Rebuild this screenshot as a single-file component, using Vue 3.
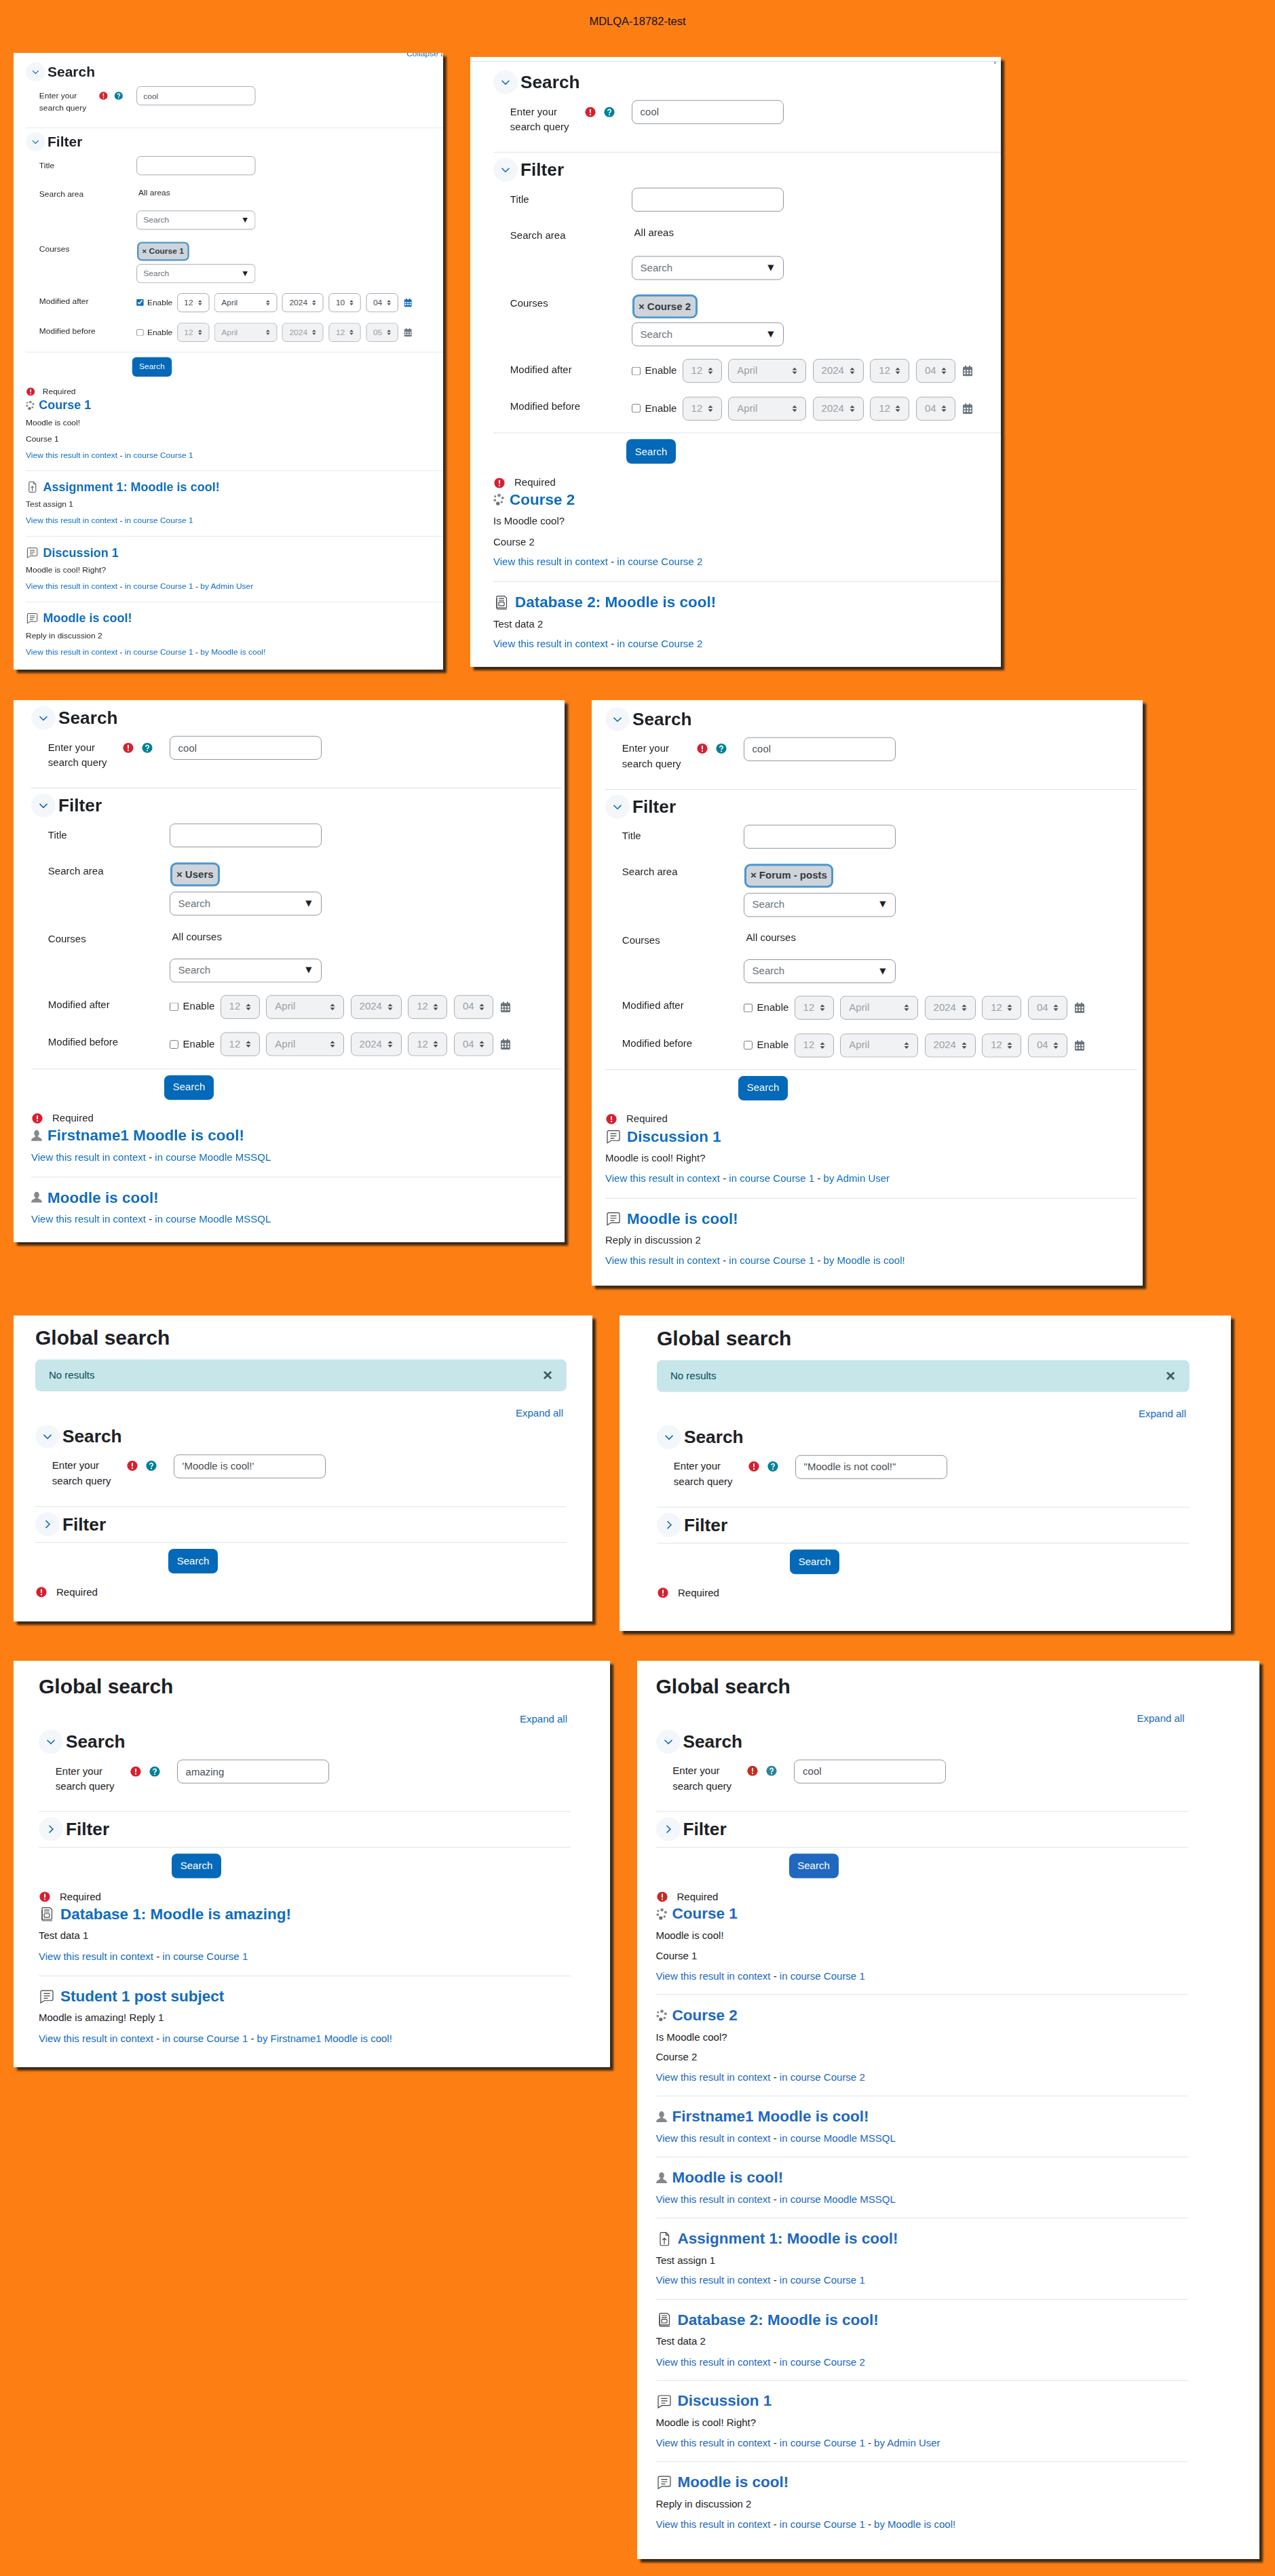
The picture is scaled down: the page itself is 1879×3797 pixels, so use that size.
<script setup>
const dates = (o = {}) => ({
  after: { on: o.on || false, v: ['12', 'April', '2024', o.h || '12', o.m || '04'] },
  before: { on: false, v: ['12', 'April', '2024', '12', o.m2 || '04'] }
})
const r = (type, title, lines, course, by) => ({ type, title, lines, course, by })

const c1 = r('course', 'Course 1', ['Moodle is cool!', 'Course 1'], 'Course 1')
const c2 = r('course', 'Course 2', ['Is Moodle cool?', 'Course 2'], 'Course 2')
const u1 = r('user', 'Firstname1 Moodle is cool!', [], 'Moodle MSSQL')
const u2 = r('user', 'Moodle is cool!', [], 'Moodle MSSQL')
const a1 = r('assign', 'Assignment 1: Moodle is cool!', ['Test assign 1'], 'Course 1')
const d2 = r('data', 'Database 2: Moodle is cool!', ['Test data 2'], 'Course 2')
const f1 = r('forum', 'Discussion 1', ['Moodle is cool! Right?'], 'Course 1', 'Admin User')
const f2 = r('forum', 'Moodle is cool!', ['Reply in discussion 2'], 'Course 1', 'Moodle is cool!')

const rows = [
  [
    { cls: 'c1', top: 'Collapse all', query: 'cool', open: true, areaChip: '', courseChip: 'Course 1', ...dates({ on: true, h: '10', m: '04', m2: '05' }), results: [c1, a1, f1, f2] },
    { cls: 'c2', top: 'Collapse all', query: 'cool', open: true, areaChip: '', courseChip: 'Course 2', ...dates(), results: [c2, d2] }
  ],
  [
    { cls: 'c3', query: 'cool', open: true, areaChip: 'Users', courseChip: '', ...dates(), results: [u1, u2] },
    { cls: 'c4', query: 'cool', open: true, areaChip: 'Forum - posts', courseChip: '', ...dates(), results: [f1, f2] }
  ],
  [
    { cls: 'c5', page: true, alert: 'No results', query: "'Moodle is cool!'", open: false, results: [] },
    { cls: 'c6', page: true, alert: 'No results', query: '"Moodle is not cool!"', open: false, results: [] }
  ],
  [
    {
      cls: 'c7', page: true, query: 'amazing', open: false,
      results: [
        r('data', 'Database 1: Moodle is amazing!', ['Test data 1'], 'Course 1'),
        r('forum', 'Student 1 post subject', ['Moodle is amazing! Reply 1'], 'Course 1', 'Firstname1 Moodle is cool!')
      ]
    },
    { cls: 'c8', page: true, query: 'cool', open: false, results: [c1, c2, u1, u2, a1, d2, f1, f2] }
  ]
]
</script>

<template>
  <div class="page">
    <div class="doc-title">MDLQA-18782-test</div>
    <div v-for="(row, ri) in rows" :key="ri" class="row" :class="'row' + ri">
      <div v-for="card in row" :key="card.cls" class="card" :class="card.cls">
        <div v-if="card.cls === 'c2'" class="topline"></div>
        <div class="inner">
          <a v-if="card.top" class="toplink">{{ card.top }}</a>

          <template v-if="card.page">
            <h2 class="page-h">Global search</h2>
            <div v-if="card.alert" class="alert">
              <span>{{ card.alert }}</span>
              <span class="alert-x">×</span>
            </div>
            <div class="expand" :class="{ tight: card.alert }"><a>Expand all</a></div>
          </template>

          <div class="fhead">
            <span class="circle">
              <svg width="16" height="16" viewBox="0 0 16 16"><path d="M2.5 5.5 8 11l5.5-5.5" fill="none" stroke="#0f6cbf" stroke-width="1.6" /></svg>
            </span>
            <h3>Search</h3>
          </div>
          <div class="frow query-row">
            <div class="flabel">
              <span class="ltext">Enter your search query</span>
              <svg class="ficon" width="16" height="16" viewBox="0 0 16 16"><circle cx="8" cy="8" r="7.6" class="red" /><rect x="7" y="3.4" width="2" height="6" rx="1" fill="#fff" /><circle cx="8" cy="11.8" r="1.15" fill="#fff" /></svg>
              <svg class="ficon teal-i" width="16" height="16" viewBox="0 0 16 16"><circle cx="8" cy="8" r="7.6" class="teal" /><path d="M5.8 6.3a2.2 2.2 0 1 1 3.4 1.8C8.4 8.6 8 9 8 9.8" fill="none" stroke="#fff" stroke-width="1.7" /><circle cx="8" cy="12" r="1.1" fill="#fff" /></svg>
            </div>
            <input class="ctl" type="text" :value="card.query" readonly />
          </div>
          <div class="line"></div>

          <div class="fhead">
            <span class="circle">
              <svg v-if="card.open" width="16" height="16" viewBox="0 0 16 16"><path d="M2.5 5.5 8 11l5.5-5.5" fill="none" stroke="#0f6cbf" stroke-width="1.6" /></svg>
              <svg v-else width="16" height="16" viewBox="0 0 16 16"><path d="M5.5 2.5 11 8l-5.500 5.500" fill="none" stroke="#0f6cbf" stroke-width="1.6" /></svg>
            </span>
            <h3>Filter</h3>
          </div>

          <div v-if="card.open" class="filter-body">
            <div class="frow title-row">
              <div class="flabel"><span>Title</span></div>
              <input class="ctl" type="text" value="" readonly />
            </div>

            <div class="frow area-row">
              <div class="flabel"><span>Search area</span></div>
              <div class="acol">
                <span v-if="card.areaChip" class="chip"><span class="chip-x">×</span> {{ card.areaChip }}</span>
                <div v-else class="none-sel">All areas</div>
                <div class="ctl dd"><span>Search</span><span class="dd-arrow">▼</span></div>
              </div>
            </div>

            <div class="frow course-row">
              <div class="flabel"><span>Courses</span></div>
              <div class="acol">
                <span v-if="card.courseChip" class="chip"><span class="chip-x">×</span> {{ card.courseChip }}</span>
                <div v-else class="none-sel">All courses</div>
                <div class="ctl dd"><span>Search</span><span class="dd-arrow">▼</span></div>
              </div>
            </div>

            <div v-for="d in [{ n: 'Modified after', x: card.after }, { n: 'Modified before', x: card.before }]" :key="d.n" class="frow date-row">
              <div class="flabel"><span>{{ d.n }}</span></div>
              <div class="dates" :class="{ on: d.x.on }">
                <input class="chk" type="checkbox" :checked="d.x.on" />
                <span class="enable">Enable</span>
                <div v-for="(v, i) in d.x.v" :key="i" class="dsel" :class="'w' + i">
                  <span>{{ v }}</span>
                  <svg width="8" height="12" viewBox="0 0 8 12"><path d="M4 1 7.500 5H.5zM4 11 .5 7h7z" fill="#495057" /></svg>
                </div>
                <svg class="cal" width="14" height="16" viewBox="0 0 14 16">
                  <path fill-rule="evenodd" d="M3 0h2v2h4V0h2v2h1.500A1.500 1.500 0 0 1 14 3.500v11a1.500 1.500 0 0 1-1.500 1.500h-11A1.500 1.500 0 0 1 0 14.500v-11A1.500 1.500 0 0 1 1.500 2H3zM1.500 6.500V9H4V6.500zm4.250 0V9h2.500V6.500zm4.250 0V9h2.500V6.500zM1.500 10.500V13H4v-2.500zm4.250 0V13h2.500v-2.500zm4.250 0V13h2.500v-2.500z" />
                </svg>
              </div>
            </div>
          </div>
          <div class="line after-filter" :class="{ open: card.open }"></div>

          <div class="btn-row"><button class="btn" type="button">Search</button></div>

          <div class="required">
            <svg width="16" height="16" viewBox="0 0 16 16"><circle cx="8" cy="8" r="7.6" class="red" /><rect x="7" y="3.4" width="2" height="6" rx="1" fill="#fff" /><circle cx="8" cy="11.8" r="1.15" fill="#fff" /></svg>
            <span>Required</span>
          </div>

          <div v-for="(res, i) in card.results" :key="i" class="result" :class="{ first: i === 0 }">
            <h4 class="rtitle">
              <svg v-if="res.type === 'course'" class="i16" width="16" height="18" viewBox="0 0 16 18" fill="#85898d">
                <circle cx="8.500" cy="2.700" r="2.400" /><circle cx="13.800" cy="6.500" r="2" /><circle cx="12.300" cy="12.800" r="1.800" /><circle cx="6.800" cy="15" r="2.700" fill="#6a737b" /><circle cx="2.300" cy="10" r="1.900" /><circle cx="2.800" cy="4.200" r="1.600" />
              </svg>
              <svg v-else-if="res.type === 'user'" class="i16" width="16" height="18" viewBox="0 0 16 18" fill="#85898d">
                <ellipse cx="8" cy="5.500" rx="3.800" ry="4.800" /><path d="M0 17c0-3 2-4.600 5-5.600l1-1.400h4l1 1.400c3 1 5 2.600 5 5.600z" />
              </svg>
              <svg v-else-if="res.type === 'assign'" class="i24" width="24" height="24" viewBox="0 0 24 24" fill="none" stroke="#3c4247" stroke-width="1.200">
                <path d="M7.500 2.500h7l4 4v14a1.500 1.500 0 0 1-1.500 1.500H7.500A1.500 1.500 0 0 1 6 20.500V4a1.500 1.500 0 0 1 1.500-1.500zM14.500 2.500v4h4" />
                <path d="M12 20v-9m-3 3 3-3 3 3" />
              </svg>
              <svg v-else-if="res.type === 'data'" class="i24" width="24" height="24" viewBox="0 0 24 24" fill="none" stroke="#3c4247" stroke-width="1.200">
                <path d="M6 2.500h10.500l3 3V19a1 1 0 0 1-1 1H6a1 1 0 0 1-1-1V3.500a1 1 0 0 1 1-1z" />
                <path d="M5 6v14.500A1.500 1.500 0 0 0 6.500 22H20" />
                <path d="M8 6h8M8 9h8" /><rect x="8" y="11.500" width="8" height="5.500" rx="1" />
              </svg>
              <svg v-else class="i24" width="24" height="24" viewBox="0 0 24 24" fill="none" stroke="#3c4247" stroke-width="1.200">
                <path d="M5 3.500h14a2 2 0 0 1 2 2v11a2 2 0 0 1-2 2H8.500L3 22V5.500a2 2 0 0 1 2-2z" />
                <path d="M7.500 8h9M7.500 11.500h9M7.500 15h6" />
              </svg>
              <a>{{ res.title }}</a>
            </h4>
            <p v-for="(l, j) in res.lines" :key="j" class="rline">{{ l }}</p>
            <p class="rlink">
              <a>View this result in context</a> - <a>in course {{ res.course }}</a><template v-if="res.by"> - <a>by {{ res.by }}</a></template>
            </p>
          </div>
        </div>
      </div>
    </div>
  </div>
</template>

<style>
html, body { margin: 0; padding: 0; background: #fd7f14; }
</style>

<style scoped>
.page {
  width: 1879px;
  height: 3797px;
  box-sizing: border-box;
  background: #fd7f14;
  font-family: "Liberation Sans", Arial, sans-serif;
  font-size: 15px;
  line-height: 22.5px;
  color: #1d2125;
  overflow: hidden;
  display: flex;
  flex-direction: column;
  gap: 44px;
}
.doc-title { height: 78px; margin-bottom: -44px; box-sizing: border-box; padding-top: 20px; text-align: center; font-size: 16.500px; color: #111; }
.row { display: flex; align-items: flex-start; gap: 40px; padding-left: 20px; }
.row0 { margin-bottom: 1px; }

.card {
  --primary: #0569b9; --red: #d81f2f; --teal: #008196; --link: #0f6cbf; --rpb: 17.500px;
  --col: 224px;
  position: relative;
  flex: none;
  background: #fff;
  overflow: hidden;
  box-shadow: 5px 5px 3px #3a2a18;
  width: var(--cw);
  height: var(--ch);
}
.c1 { --cw: 633px; --ch: 909px; --left: 18px; --w: 800px; --pt: 18.400px; --sx: .8; --sy: .78; --col: 219px; --tr: 21px; }
.c2 { --cw: 782px; --ch: 899px; --left: 34px; --w: 784px; --pt: 19.800px; --sx: 1; --sy: .978; --tr: 3px; margin-top: 6px; }
.c3 { --cw: 812px; --ch: 799px; --left: 26px; --w: 782px; --pt: 9px; --sx: 1; --sy: .977; }
.c4 { --cw: 812px; --ch: 863px; --left: 20px; --w: 784px; --pt: 10.700px; --sx: 1; --sy: .977; }
.c5 { --cw: 853px; --ch: 451px; --left: 32px; --w: 783px; --pt: 16.400px; --sx: 1; --sy: .98; }
.c6 { --cw: 901px; --ch: 465px; --left: 55px; --w: 785px; --pt: 17.400px; --sx: 1; --sy: .98; }
.c7 { --cw: 878.500px; --ch: 599px; --left: 37px; --w: 784px; --pt: 21.200px; --sx: 1; --sy: .977; }
.c8 { --cw: 917px; --ch: 1324px; --left: 28px; --w: 784px; --pt: 20.700px; --sx: 1; --sy: .977; --primary: #2068bf; --red: #cb2a1f; --teal: #2c84a0; --link: #2068bf; --rpb: 16px; }

.topline { position: absolute; z-index: 1; left: 0; right: 0; top: 0; height: 6px; background: #fff; border-bottom: 1px solid #dee2e6; }
.inner {
  position: relative;
  width: var(--w);
  margin-left: var(--left);
  padding-top: var(--pt);
  transform-origin: 0 0;
  transform: scale(var(--sx), var(--sy));
}
a { color: var(--link); text-decoration: none; }
.toplink { position: absolute; right: var(--tr); top: -9px; }
.red { fill: var(--red); }
.teal { fill: var(--teal); }

.page-h { margin: 0; font-size: 30px; line-height: 36px; font-weight: 700; }
.alert {
  display: flex;
  justify-content: space-between;
  align-items: center;
  box-sizing: border-box;
  height: 47.700px;
  margin: 14px 0 22px;
  padding: 0 21px 0 20px;
  border-radius: 8px;
  background: #c7e6ea;
  color: #044a52;
}
.alert-x { font-size: 24px; font-weight: 700; color: #3e5a5e; }
.expand { margin-top: 19.500px; margin-bottom: 5px; padding-right: 5px; text-align: right; }
.expand.tight { margin-top: 0; }

.fhead { display: flex; align-items: center; gap: 4px; height: 36px; }
.circle { width: 36px; height: 36px; flex: none; border-radius: 50%; background: #f3f7fb; display: flex; align-items: center; justify-content: center; }
h3 { margin: 0; font-size: 26.250px; line-height: 32px; font-weight: 700; }

.frow { display: flex; align-items: flex-start; }
.flabel { flex: none; box-sizing: border-box; width: 203.600px; padding: 6.750px 0 0 24.800px; display: flex; align-items: flex-start; }
.ltext { width: 110px; flex: none; }
.ficon { margin-top: 3px; flex: none; }
.teal-i { margin-left: 12px; }
.ctl {
  display: block;
  box-sizing: border-box;
  width: var(--col);
  height: 36px;
  padding: 0 12px;
  margin: 0;
  border: 1px solid #8f959e;
  border-radius: 8px;
  background: #fff;
  font: inherit;
  color: #495057;
  outline: none;
}
.query-row { margin-top: 9px; padding-bottom: 26.250px; }
.line { border-top: 1px solid #dee2e6; margin-bottom: 8px; }
.filter-body { margin-top: 9px; }
.title-row { height: 36px; margin-bottom: 18px; }
.area-row { height: 85px; margin-bottom: 17.500px; }
.course-row { height: 83px; margin-bottom: 19px; }
.acol { width: var(--col); position: relative; height: 100%; display: flex; flex-direction: column; justify-content: flex-end; }
.chip {
  position: absolute;
  left: 1px;
  top: 5px;
  box-sizing: border-box;
  height: 36px;
  padding: 0 6.500px;
  display: flex;
  align-items: center;
  gap: 4px;
  white-space: nowrap;
  border: 3px solid #4e97cd;
  border-radius: 9px;
  background: #ced4da;
  font-weight: 700;
  color: #343a40;
}
.chip-x { font-weight: 700; }
.none-sel { position: absolute; left: 4px; top: 3.250px; }
.dd { display: flex; align-items: center; justify-content: space-between; color: #6a737b; padding-right: 13px; }
.dd-arrow { font-family: "DejaVu Sans", sans-serif; font-size: 12px; color: #1d2125; margin-top: -2px; }

.date-row { height: 36px; margin-bottom: 20.500px; }
.date-row .flabel { padding-top: 4.250px; }
.dates { display: flex; align-items: center; height: 36px; color: #1d2125; }
.chk { width: 13px; height: 13px; margin: 0 7px 0 0; accent-color: #0f6cbf; flex: none; }
.enable { width: 47px; margin-right: 8px; flex: none; }
.dsel {
  box-sizing: border-box;
  height: 36px;
  margin-right: 9.700px;
  padding: 0 12px;
  flex: none;
  display: flex;
  align-items: center;
  justify-content: space-between;
  border: 1px solid #a9adb3;
  border-radius: 8px;
  background: #f1f2f4;
  color: #9aa0a6;
}
.dates.on .dsel { background: #fff; color: #495057; border-color: #8f959e; }
.w0, .w3, .w4 { width: 58px; }
.w1 { width: 114.600px; }
.w2 { width: 75px; }
.c1 .w0, .c1 .w3, .c1 .w4 { width: 59px; }
.c1 .w1 { width: 115.500px; }
.c1 .w2 { width: 76px; }
.cal { margin-left: 1.500px; fill: #6a737b; flex: none; }
.dates.on .cal { fill: #0f6cbf; }

.after-filter { margin-top: 9px; }
.after-filter.open { margin-top: -2px; }
.btn-row { padding-left: 196px; padding-top: 1px; }
.btn {
  display: block;
  width: 73px;
  height: 37px;
  padding: 0;
  border: 0;
  border-radius: 8px;
  background: var(--primary);
  color: #fff;
  font: inherit;
}
.required { display: flex; align-items: center; margin-top: 17px; height: 22.500px; }
.required svg { margin-left: 1px; margin-right: 14px; }

.result { padding: 17px 0 var(--rpb); border-top: 1px solid #dee2e6; }
.result.first { padding-top: 1px; border-top: 0; }
.rtitle { display: flex; align-items: center; height: 27px; margin: 0 0 8.500px; font-size: 22.500px; line-height: 27px; font-weight: 700; }
.rtitle svg { flex: none; }
.i16 { margin-right: 8px; }
.i24 { margin-right: 8px; }
.rline, .rlink { margin: 0; white-space: nowrap; }
.rline { margin-bottom: 8px; }
</style>
